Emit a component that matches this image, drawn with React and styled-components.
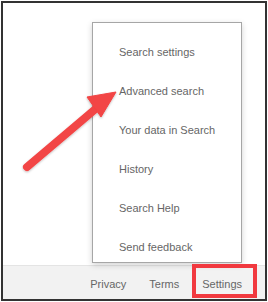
import React from "react";
import styled, { createGlobalStyle } from "styled-components";

const menuItems = [
  "Search settings",
  "Advanced search",
  "Your data in Search",
  "History",
  "Search Help",
  "Send feedback"
];

const footerLinks = ["Privacy", "Terms", "Settings"];

const GlobalStyle = createGlobalStyle`
  html, body {
    margin: 0;
    padding: 0;
    background: #fff;
  }
  body {
    font-family: "Liberation Sans", Arial, sans-serif;
  }
`;

const Frame = styled.div`
  width: 268px;
  height: 302px;
  padding: 1px;
  box-sizing: border-box;
  background: #fff;
`;

const Window = styled.div`
  position: relative;
  display: flex;
  flex-direction: column;
  height: 100%;
  border: 2px solid #333;
  box-sizing: border-box;
  overflow: hidden;
`;

const Main = styled.div`
  flex: 1;
  padding: 19px 0 0 89px;
  min-height: 0;
`;

const Menu = styled.ul`
  position: relative;
  z-index: 2;
  display: flex;
  flex-direction: column;
  width: 150px;
  height: 241px;
  margin: 0;
  padding: 9px 0 0 26px;
  box-sizing: border-box;
  list-style: none;
  background: #fff;
  border: 1px solid #a6a6a6;
  box-shadow: 0 2px 6px rgba(0, 0, 0, 0.18);
`;

const MenuItem = styled.li`
  flex: 0 0 39px;
  display: flex;
  align-items: center;
  font-size: 11px;
  color: #666;
  white-space: nowrap;
`;

const Footer = styled.div`
  display: flex;
  justify-content: flex-end;
  align-items: center;
  gap: 23px;
  height: 34px;
  padding: 3px 23px 0 0;
  box-sizing: border-box;
  background: #f2f2f2;
  border-top: 1px solid #e4e4e4;
`;

const FooterLink = styled.a`
  font-size: 11px;
  color: #666;
  text-decoration: none;
`;

const Highlight = styled.div`
  position: absolute;
  left: 189px;
  top: 261px;
  width: 65px;
  height: 34px;
  border: 4px solid #f1393f;
  box-sizing: border-box;
  pointer-events: none;
  z-index: 3;
`;

const Overlay = styled.svg`
  position: absolute;
  left: -3px;
  top: -3px;
  width: 268px;
  height: 302px;
  pointer-events: none;
  z-index: 4;
`;

const Arrow = () => (
  <Overlay viewBox="0 0 268 302">
    <defs>
      <filter id="arrowShadow" x="-20%" y="-20%" width="140%" height="140%">
        <feDropShadow dx="0" dy="1" stdDeviation="1" floodColor="#000" floodOpacity="0.25" />
      </filter>
    </defs>
    <g filter="url(#arrowShadow)" fill="#f24444" stroke="#f24444">
      <line x1="27" y1="167" x2="99" y2="106" strokeWidth="8" strokeLinecap="round" />
      <polygon points="116,92 87,97 101,117" strokeWidth="1" strokeLinejoin="round" />
    </g>
  </Overlay>
);

const App = () => (
  <Frame>
    <GlobalStyle />
    <Window>
      <Main>
        <Menu>
          {menuItems.map(label => (
            <MenuItem key={label}>{label}</MenuItem>
          ))}
        </Menu>
      </Main>
      <Footer>
        {footerLinks.map(label => (
          <FooterLink key={label}>{label}</FooterLink>
        ))}
      </Footer>
      <Highlight />
      <Arrow />
    </Window>
  </Frame>
);

export default App;
